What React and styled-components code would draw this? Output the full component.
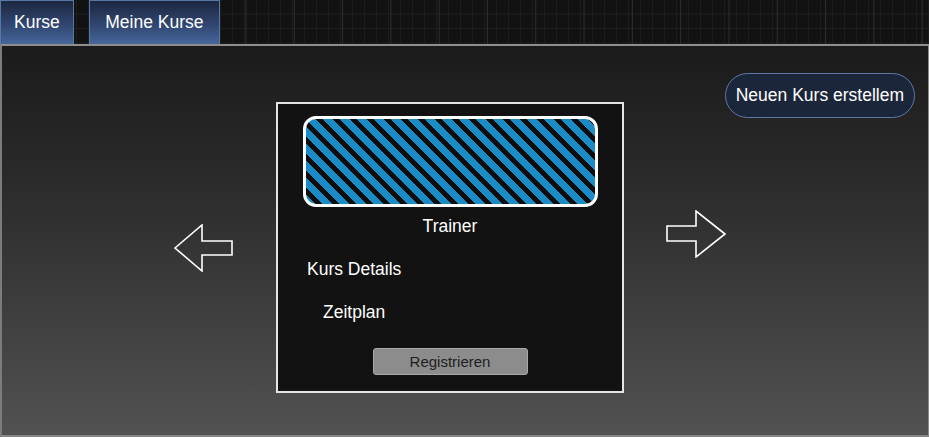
import React from 'react'
import styled, { createGlobalStyle } from 'styled-components'

const GlobalStyle = createGlobalStyle`
  html, body {
    margin: 0;
    padding: 0;
    background: #111;
  }
  body {
    font-family: "Liberation Sans", Arial, sans-serif;
  }
`

const tabs = [
  { label: 'Kurse', pad: 13 },
  { label: 'Meine Kurse', pad: 15.5 }
]

const LeftArrow = () => (
  <svg width="60" height="48" viewBox="0 0 60 48">
    <path d="M1 24 L28 1 L28 17 L58 17 L58 31 L28 31 L28 47 Z" fill="none" stroke="#fff" strokeWidth="1.6" strokeLinejoin="miter" />
  </svg>
)

const RightArrow = () => (
  <svg width="60" height="48" viewBox="0 0 60 48">
    <path d="M59 24 L30 1 L30 16 L1 16 L1 31 L30 31 L30 47 Z" fill="none" stroke="#fff" strokeWidth="1.6" strokeLinejoin="miter" />
  </svg>
)

export default function App() {
  return (
    <Page>
      <GlobalStyle />
      <TopBar>
        {tabs.map((t) => (
          <Tab key={t.label} pad={t.pad}>{t.label}</Tab>
        ))}
      </TopBar>
      <Panel>
        <CreateButton>Neuen Kurs erstellem</CreateButton>
        <Stage>
          <ArrowSlot>
            <LeftArrow />
          </ArrowSlot>
          <Card>
            <Banner />
            <Trainer>Trainer</Trainer>
            <Info indent={29}>Kurs Details</Info>
            <Info indent={45}>Zeitplan</Info>
            <RegisterButton>Registrieren</RegisterButton>
          </Card>
          <ArrowSlot lift={28}>
            <RightArrow />
          </ArrowSlot>
        </Stage>
      </Panel>
    </Page>
  )
}

// STYLES
const Page = styled.div`
  width: 929px;
  height: 437px;
  display: flex;
  flex-direction: column;
  overflow: hidden;
`

const TopBar = styled.div`
  height: 44px;
  flex: none;
  display: flex;
  gap: 15px;
  background-color: #121212;
  background-image:
    linear-gradient(90deg, #2e2e2e 1px, transparent 1px),
    linear-gradient(90deg, #1d1d1d 1px, transparent 1px),
    linear-gradient(0deg, #1f1f1f 1px, transparent 1px);
  background-size: 48.3px 100%, 12px 100%, 100% 14.5px;
  background-position: 4px 0, 4px 0, 0 0;
`

const Tab = styled.div`
  height: 44px;
  box-sizing: border-box;
  padding: 0 ${(p) => p.pad}px;
  display: flex;
  align-items: center;
  border: 1px solid #5777a5;
  border-bottom: none;
  background: linear-gradient(180deg, #1d2740 0%, #304670 55%, #46669a 100%);
  color: #fff;
  font-size: 17.5px;
`

const Panel = styled.div`
  flex: 1;
  display: grid;
  border-top: 2px solid #8e8e8e;
  border-left: 2px solid #7c7c7c;
  border-right: 1px solid #8a8a8a;
  border-bottom: 2px solid #858585;
  background: linear-gradient(180deg, #1b1b1b 0%, #2b2b2b 35%, #3c3c3c 65%, #525252 100%);
`

const CreateButton = styled.button`
  grid-area: 1 / 1;
  justify-self: end;
  align-self: start;
  margin: 27px 13px 0 0;
  height: 45px;
  padding: 0 10px;
  border-radius: 23px;
  border: 1px solid #5d78a6;
  background: #1c263a;
  color: #fff;
  font-family: "Liberation Sans", Arial, sans-serif;
  font-size: 17.5px;
`

const Stage = styled.div`
  grid-area: 1 / 1;
  align-self: start;
  display: flex;
  align-items: center;
  justify-content: center;
  gap: 42px;
  padding: 56px 30px 0 0;
`

const ArrowSlot = styled.div`
  display: flex;
  margin-bottom: ${(p) => p.lift || 0}px;
`

const Card = styled.div`
  width: 348px;
  height: 291px;
  box-sizing: border-box;
  border: 2px solid #e4e4e4;
  background: #121212;
  display: flex;
  flex-direction: column;
  align-items: center;
  color: #fff;
  font-size: 17.5px;
`

const Banner = styled.div`
  margin-top: 12px;
  width: 295px;
  height: 91px;
  box-sizing: border-box;
  border: 3px solid #fff;
  border-radius: 13px;
  background: repeating-linear-gradient(45deg, #1b8bc5 0 7px, #0d0d0d 7px 12px);
`

const Trainer = styled.div`
  margin-top: 9px;
  line-height: 20px;
`

const Info = styled.div`
  align-self: flex-start;
  margin-top: 24px;
  padding-left: ${(p) => p.indent}px;
  line-height: 19px;
`

const RegisterButton = styled.button`
  margin-top: 26px;
  width: 155px;
  height: 27px;
  border: 1px solid #a8a8a8;
  border-radius: 3px;
  background: #8c8c8c;
  color: #1e1e1e;
  font-family: "Liberation Sans", Arial, sans-serif;
  font-size: 15px;
  padding: 0;
`
